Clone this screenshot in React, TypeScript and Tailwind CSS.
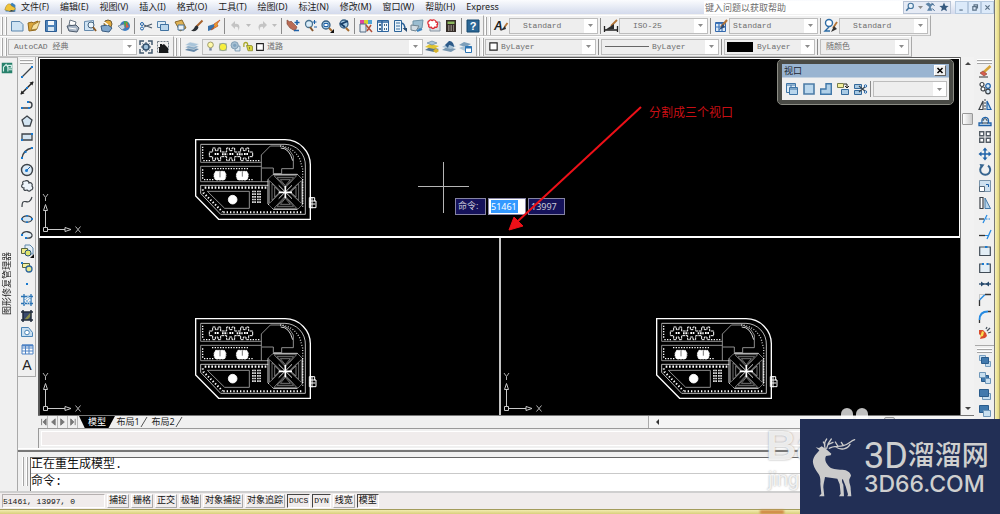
import React from "react";

const B = "#1f62a8";
const L = "#b9d6ec";
const K = "#3c4248";

const icons: Record<string, React.ReactNode> = {
  new: <path d="M2.500 3.500h8.500l3 3v6.500h-11.500z" fill="#cfe3f3" stroke="#5b86ae" />,
  open: <><path d="M3 13L2 5l4-1 1 1 5-2-2 9z" fill="#d9a53a" stroke="#94691c" /><path d="M5 12l2-5 7-4-3 8z" fill="#f7e2a0" stroke="#8d6a24" strokeWidth=".7" /></>,
  save: <><path d="M2.500 2.500h11v11h-11z" fill="#4e83b9" stroke="#2b5c93" /><path d="M5 3h6v4H5z" fill="#f4f8fb" /><path d="M5 9h6v4H5z" fill="#d7e6f2" /></>,
  print: <><path d="M5 2l6 2-1 4-6-1z" fill="#fff" stroke="#66727f" /><path d="M2 8l9-1 3 3-2 4-8-1z" fill="#a9b6c6" stroke="#4d5b6c" /><path d="M4 10l7 1" stroke="#fff" /></>,
  preview: <><path d="M2.500 3.500l9-1v10h-9z" fill="#cfe3f3" stroke="#6489ac" /><circle cx="9" cy="7" r="3" fill="#eaf4fb" stroke="#44637f" /><path d="M11 9l3 4" stroke="#8a5a28" strokeWidth="1.800" /></>,
  publish: <><circle cx="9" cy="6" r="4" fill="#e2aa3c" stroke="#6d5a36" /><path d="M2 8l7-1 4 3-3 4-7-1z" fill="#7fa6cc" stroke="#395b80" /><path d="M5 4l4 3" stroke="#fff" strokeWidth="1.500" /></>,
  globe: <><circle cx="9" cy="8" r="5" fill="#3d7cc0" /><path d="M8 3l4 1v3l-4 2z" fill="#4ca64d" /><path d="M2 8l6-2 1 4-3 2z" fill="#c5d5e5" stroke="#66788b" strokeWidth=".7" /><path d="M10 4l3 5-3 1z" fill="#d95c43" /></>,
  cut: <><path d="M14 6L6 9M14 10L6 7" stroke="#4a5a6b" strokeWidth="1.300" /><circle cx="4" cy="6" r="1.500" fill="none" stroke={B} /><circle cx="4" cy="10.500" r="1.500" fill="none" stroke={B} /></>,
  copy: <><path d="M2.500 3.500h8v6h-8z" fill="#dcebf6" stroke="#5885ad" /><path d="M5.500 6.500h8v6h-8z" fill={L} stroke="#3f719f" /></>,
  paste: <><path d="M3 4l7-2 4 8-6 3z" fill="#e0b355" stroke="#8a6a2a" /><path d="M6 7h6v5H6z" fill="#e9f2f9" stroke="#47729b" /></>,
  brush: <><path d="M13.500 2.500L7 9" stroke="#a8632c" strokeWidth="2" /><path d="M8 7.500c-3 0-2 4-6 5 3 2 7 0 7.500-3.500z" fill="#2b2f33" /></>,
  block: <><path d="M2 8l6-2v5l-6 2z" fill="#3a72ab" /><path d="M14 2L8 6l1 2-4 4 7-4-1-2z" fill="#eea12b" stroke="#be4c20" strokeWidth=".7" /></>,
  undo: <path d="M3 7l4-4v3c4-1 6 3 3 7 1-4-1-5-3-4v2z" fill="#c4c4c4" />,
  redo: <path d="M13 7L9 3v3C5 5 3 9 6 13c-1-4 1-5 3-4v2z" fill="#c4c4c4" />,
  pan: <><path d="M2 2l3 2 1-1 6 6-2 4-5-3-3-4z" fill="#b96b55" stroke="#7d4334" strokeWidth=".6" /><path d="M12 2v5M9.500 4.500h5M9 12.500h5" stroke={B} strokeWidth="1.500" /></>,
  zoomrt: <><circle cx="7" cy="6" r="3.500" fill="#d9ecf8" stroke="#49728f" strokeWidth="1.300" /><path d="M8 9l3 4" stroke="#87562c" strokeWidth="2" /><path d="M12.500 2v4M10.500 4h4M12 9h3" stroke={B} /></>,
  zoomwin: <><circle cx="7" cy="7" r="4" fill="#a9cce4" stroke="#355f84" strokeWidth="1.300" /><path d="M5 5.500h4v3H5z" fill="#fff" stroke={B} /><path d="M10 10l3 3" stroke="#a66c2f" strokeWidth="2" /><path d="M15 11v4h-4z" fill="#111" /></>,
  zoomprev: <><circle cx="8" cy="6" r="4" fill="#a9cce4" stroke="#355f84" strokeWidth="1.300" /><path d="M12 3L5 6l4 3" fill="none" stroke="#173f69" strokeWidth="1.800" /><path d="M10 10l3 3" stroke="#a66c2f" strokeWidth="2" /></>,
  props: <><path d="M2 2h12v4H2z" fill="#51a3d6" /><path d="M2 2h4v4H2z" fill="#e047a0" /><path d="M6 2h4v4H6z" fill="#d3d432" /><path d="M2 6h6v8H2z" fill="#e2e9f0" stroke="#526b84" /><path d="M8 7l6 7M13 7l-4 6" stroke="#b14c36" strokeWidth="1.500" /></>,
  dcenter: <><path d="M2.500 2.500h11v11h-11z" fill="#f1f7fb" stroke="#2e659e" /><path d="M2.500 4h11M7 2v12" stroke="#2e659e" strokeWidth="1.500" /><path d="M4 6h2v2H4zM9 6h1v2H9zM11 6h1v2h-1zM4 10h2v2H4zM9 10h1v2H9zM11 10h1v2h-1z" fill="#476987" /></>,
  palettes: <><path d="M2.500 2.500h7v11h-7z" fill="#e7f2fa" stroke="#2b6398" /><path d="M4 5h4M4 8h4M4 11h4" stroke="#386e9f" /><path d="M9 5c3 0 4 3 4 7" fill="none" stroke="#2a6198" strokeWidth="1.500" /><path d="M10.500 10h4.500v4z" fill="#294d72" /></>,
  sheet: <><path d="M4 3l10-1-1 8-9 2z" fill="#9bbdd0" stroke="#6f94a8" /><path d="M2 7l8 1-3 5-5-1z" fill="#d3dce2" stroke="#708490" /><path d="M8 13l5-2" stroke="#3b83bf" strokeWidth="2" /></>,
  markup: <><path d="M4 4h10v9H4z" fill="#d9dfe5" stroke="#8492a0" /><path d="M3 3c1-2 3-1 3 0 1-2 4-1 4 1 2 0 2 3 1 3 1 2-1 3-2 2-1 2-3 2-4 0-2 1-3-1-2-2-2-1-1-4 0-4z" fill="#fff" stroke="#e02832" strokeWidth="1.300" /></>,
  calc: <><path d="M3 2h10v12H3z" fill="#352d28" /><path d="M4.500 3.500h7v2.500h-7z" fill="#8bb65e" /><path d="M5 8h6M5 10h6M5 12h6" stroke="#d4cac1" strokeDasharray="1.500 1" /></>,
  help: <><path d="M2 2h12v12H2z" fill="#2b6795" stroke="#17496f" /><text x="8" y="12" textAnchor="middle" fontSize="11" fontWeight="700" fill="#fff" fontFamily="Liberation Sans">?</text></>,
  gear: <><path d="M2 6V2h4M10 2h4v4M14 10v4h-4M6 14H2v-4" fill="none" stroke="#41586d" strokeWidth="1.500" /><circle cx="8" cy="8" r="3" fill="#9ec0da" stroke="#36536f" strokeWidth="1.500" /><path d="M8 3v2M8 11v2M3 8h2M11 8h2M4.500 4.500l1 1M10.500 10.500l1 1M4.500 11.500l1-1M10.500 5.500l1-1" stroke="#36536f" /></>,
  wshome: <><path d="M2.500 2.500h11v11h-11z" fill="none" stroke="#6e7a84" strokeDasharray="2 1" /><path d="M3 8h2V5h2v1l2-1 4 4v5H4V9z" fill="#17191b" /></>,
  layers: <><path d="M1 11l5-3 9 2-5 3z" fill="#6588a8" /><path d="M1 8.500l5-3 9 2-5 3z" fill="#86a8c4" stroke="#efefef" strokeWidth=".5" /><path d="M1 6l5-3 9 2-5 3z" fill="#a9c4d9" stroke="#efefef" strokeWidth=".5" /></>,
  bulb: <><circle cx="8" cy="6" r="3.500" fill="#fff9a7" stroke="#8d8a5d" /><path d="M6.500 10h3v3h-3z" fill="#7788a0" /></>,
  sun: <><path d="M3 3h10v10H3z" fill="#a9b8a8" /><circle cx="8" cy="8" r="5" fill="#f7ef3e" stroke="#7c9198" /></>,
  freeze: <><path d="M7.500 7.500h6v6h-6z" fill="#ddeaf3" stroke="#6b8da8" /><circle cx="7" cy="6.500" r="4.500" fill="#a6bfd2" stroke="#7896ae" /><circle cx="7" cy="6.500" r="2" fill="#7fa3bf" /></>,
  lock: <><path d="M2.500 8V4.500a2.500 2.500 0 015 0V8" fill="none" stroke="#a9a829" strokeWidth="1.700" /><path d="M6 6h6a2 2 0 012 2v5H8z" fill="#d9d63c" stroke="#86842a" /><path d="M10 8v3" stroke="#6e6c20" /></>,
  swatch: <path d="M3.500 3.500h9v9h-9z" fill="#fff" stroke="#222" strokeWidth="1.400" />,
  layercur: <><path d="M1 11l5-3 9 2-5 3z" fill="#55748e" /><path d="M1 8l5-3 9 2-5 3z" fill="#e2c634" /><path d="M3 4l5-2 5 2-5 2z" fill="#aac6db" stroke="#587b98" strokeWidth=".6" /><path d="M9 12l3-3 3 3-3 2z" fill="#d8b42c" /></>,
  layerprev: <><path d="M1 11l5-3 9 2-5 3z" fill="#7797b1" /><path d="M1 8l5-3 9 2-5 3z" fill="#a8c2d6" /><path d="M13 8c0-5-3-6-5-6L4 6l3 3 1-3c2 0 3 1 5 2z" fill="#2c5a88" /></>,
  layerstate: <><path d="M1 6l5-3 7 2-5 3z" fill="#7d9fba" /><path d="M1 9l5-2 5 2-4 3z" fill="#a9c3d6" /><path d="M7.500 7.500h6v6h-6z" fill="#fff" stroke="#2c74b3" /><path d="M7 8.500h7" stroke="#2c74b3" strokeWidth="2" /></>,
  textstyle: <><text x="1" y="12" fontSize="12" fontStyle="italic" fontWeight="700" fill="#1b1e21" fontFamily="Liberation Sans">A</text><path d="M14.500 5l-3 4" stroke="#b37436" strokeWidth="1.800" /><path d="M12 8l-5 5 6-2z" fill="#2c2c2c" /></>,
  dimstyle: <><path d="M1.500 8v6M14.500 8v6M2 12h12" stroke="#222" strokeWidth="1.300" /><path d="M14 2L8 8" stroke="#b37436" strokeWidth="1.800" /><path d="M11 6l-9 6 9-1z" fill="#2c2c2c" /></>,
  tablestyle: <><path d="M2.500 4.500h10v9h-10z" fill="#dbe9f6" stroke="#3469ad" /><path d="M2 5.500h11M2 9h11M6 5v8M9 5v8" stroke="#3f77bc" strokeWidth="1.200" /><path d="M14 2L8 9" stroke="#b37436" strokeWidth="2" /><path d="M10 6l-4 6 6-3z" fill="#2c4d77" /></>,
  leader: <><circle cx="6" cy="5" r="3.500" fill="#fff" stroke="#2d6ca5" strokeWidth="1.400" /><path d="M6 9l-4 4h5" fill="none" stroke="#2d6ca5" strokeWidth="1.400" /><path d="M14 4l-4 6" stroke="#b37436" strokeWidth="1.800" /><path d="M11 8l-3 6 6-3z" fill="#333" /></>,
  line: <><path d="M3 13L13 3" stroke={K} strokeWidth="1.300" /><path d="M2 12h2v2H2zM12 2h2v2h-2z" fill="#1879cf" /></>,
  xline: <><path d="M2 14L14 2" stroke="#222" strokeWidth="1.400" /><path d="M1.500 14.500l1-4 3 3zM14.500 1.500l-4 1 3 3z" fill="#222" /><path d="M7 7h2v2H7z" fill="#1879cf" /></>,
  pline: <><path d="M3 11h7a3 3 0 000-6H9" fill="none" stroke={K} strokeWidth="1.400" /><path d="M2 10h2v2H2zM9 10h2v2H9zM8 4h2v2H8z" fill="#1879cf" /></>,
  polygon: <path d="M8 3l5 4-2 6H5L3 7z" fill="#d3e4f1" stroke={K} strokeWidth="1.300" />,
  rect: <><path d="M3 5h10v6H3z" fill="#d3e4f1" stroke={K} strokeWidth="1.300" /><path d="M2 10h2v2H2zM12 4h2v2h-2z" fill="#1879cf" /></>,
  arc: <><path d="M3 13C4 7 8 4 13 3" fill="none" stroke={K} strokeWidth="1.400" /><path d="M2 12h2v2H2zM12 2h2v2h-2zM5.500 6h2v2h-2z" fill="#1879cf" /></>,
  circle: <><circle cx="8" cy="8" r="5.500" fill="#dceaf5" stroke={K} strokeWidth="1.400" /><path d="M7 9l4-4" stroke={B} /><circle cx="7.500" cy="8.500" r="1.500" fill="#1879cf" /></>,
  cloud: <path d="M6 3c2-1 4 0 4 2 2-1 4 1 3 3 2 2 0 4-1 4-1 2-3 1-4 0-2 1-4 0-3-2-3 0-3-3-1-4-1-2 0-3 2-3z" fill="#edf4fa" stroke={K} strokeWidth="1.200" />,
  spline: <path d="M3 13c0-12 7 1 10-10" fill="none" stroke={K} strokeWidth="1.200" />,
  ellipse: <><ellipse cx="8" cy="8" rx="5" ry="3.200" fill="#d3e4f1" stroke={K} strokeWidth="1.300" /><path d="M2 7h2v2H2zM12 7h2v2h-2zM7 4h2v1.500H7zM7 10.500h2V12H7z" fill="#1879cf" /></>,
  ellarc: <><path d="M3 8c0-5 11-4 10 1-1 3-4 2-6 2" fill="#e7f1f8" stroke={K} strokeWidth="1.300" /><path d="M2 7h2v2H2zM6 10h2v2H6z" fill="#1879cf" /></>,
  insert: <><path d="M6 2h5l3 3v6H6z" fill="#e3eef7" stroke="#6189aa" /><path d="M2.500 5.500h6v5h-6z" fill="#f0eb88" stroke="#58663e" /><circle cx="9" cy="10" r="3" fill="#dde36d" stroke="#27527a" /><path d="M15 11v4h-4z" fill="#111" /></>,
  mkblock: <><path d="M3.500 4.500h7v4h-7z" fill="#f3f0a0" stroke="#58663e" /><circle cx="10" cy="10" r="3" fill="#e8e98c" stroke="#2b639a" strokeWidth="1.300" /><path d="M2 3h2v2H2z" fill="#1879cf" /></>,
  point: <path d="M7 7h2v2H7z" fill="#1879cf" />,
  hatch: <><path d="M5 2v12M12 2v12M2 4.500h12M2 11.500h12" stroke="#2b73b3" strokeWidth="1.300" /><path d="M5 9l5-5M5 12l7-7M8 12l4-4M5 6l6 6M8 4l4 4" stroke="#94bddf" /></>,
  gradient: <><path d="M4 4h8v8H4z" fill="#3a4a6c" /><path d="M5 12l7-8v4l-4 4z" fill="#8d9047" /><path d="M4 2v12M12 2v12M2 4h12M2 12h12" stroke="#202b3b" strokeWidth="1.500" /></>,
  region: <><path d="M2.500 3.500h7l4 5v4h-11z" fill="#c9dff0" stroke="#4a84b6" /><circle cx="8" cy="8.500" r="2.300" fill="#fff" stroke="#4a84b6" /></>,
  table: <><path d="M3 4h11v9H3z" fill="#fff" stroke="#4f83c5" /><path d="M3 4.500h11" stroke="#4f83c5" strokeWidth="2" /><path d="M3 7h11M3 10h11M6.500 4v9M10 4v9" stroke="#4f83c5" /></>,
  mtext: <text x="8" y="13" textAnchor="middle" fontSize="14" fill="#222" fontFamily="Liberation Sans">A</text>,
  erase: <><path d="M13.500 2L7 8" stroke="#d6a438" strokeWidth="2.500" /><path d="M3 9l3-2 4 3-3 2z" fill="#d85e4e" stroke="#823c31" strokeWidth=".6" /><path d="M2 13h9" stroke="#333" /></>,
  copyobj: <><circle cx="5" cy="4.500" r="2" fill="#fff" stroke={K} strokeWidth="1.200" /><circle cx="11" cy="6" r="2.300" fill="#d6e8f5" stroke={B} strokeWidth="1.200" /><circle cx="6" cy="9" r="2" fill="#fff" stroke={K} strokeWidth="1.200" /><circle cx="11" cy="11.500" r="2.300" fill="#d6e8f5" stroke={K} strokeWidth="1.200" /></>,
  mirror: <><path d="M6 4v8.500H2z" fill="#fff" stroke={K} strokeWidth="1.200" /><path d="M10 4v8.500h4z" fill={L} stroke={B} strokeWidth="1.200" /><path d="M8 2v12" stroke={K} strokeDasharray="2 1" /></>,
  offset: <><path d="M2 12.500h12V10h-3c3-7-8-8-6 0H2z" fill="#d8e8f4" stroke={B} strokeWidth="1.300" /><path d="M5 10h6M6 8c0-3 4-3 4 0" fill="none" stroke={K} /></>,
  array: <path d="M2.700 2.700h4v4h-4zM9.300 2.700h4v4h-4zM2.700 9.300h4v4h-4zM9.300 9.300h4v4h-4z" fill="#fff" stroke="#555d65" strokeWidth="1.400" />,
  move: <><path d="M8 3v10M3 8h10" stroke={B} strokeWidth="1.500" /><path d="M8 1.500l2.500 3h-5zM8 14.500l2.500-3h-5zM1.500 8l3-2.500v5zM14.500 8l-3-2.500v5z" fill={B} /></>,
  rotate: <><path d="M5 4a5 5 0 106-.3" fill="none" stroke="#37658f" strokeWidth="2" /><path d="M2.500 2l5 .5-3 4z" fill="#37658f" /></>,
  scale: <><path d="M2.500 2.500h11v11h-11z" fill="#cfe1ef" stroke="#7b95ab" /><path d="M2.500 8.500h5v5h-5z" fill="#fff" stroke="#536779" /><path d="M9 6.500h2.500V9" fill="none" stroke={B} /></>,
  stretch: <><path d="M3 2.500h3v11H3z" fill="#fff" stroke={K} strokeWidth="1.200" /><path d="M8 3l5.500 10.500H8z" fill="#bad5ea" stroke="#4178a7" /></>,
  trim: <><path d="M2 8h5" stroke="#333" strokeWidth="1.300" /><path d="M6 12l4-8" stroke="#278be1" strokeWidth="1.300" /><path d="M9 8h5" stroke="#278be1" strokeDasharray="1.500 1" /></>,
  extend: <><path d="M2 8.500h6" stroke="#333" strokeWidth="1.300" /><path d="M8 8.500h3" stroke="#278be1" /><path d="M10 12l4-9" stroke="#278be1" strokeWidth="1.300" /></>,
  breakpt: <><path d="M2.700 4h10.600v8.500H2.700z" fill="#e3eef6" stroke="#414c57" strokeWidth="1.200" /><path d="M8 3h2.500v2H8z" fill="#1879cf" /></>,
  breakobj: <><path d="M5.500 4H2.700v8.500h10.600V4h-2.800" fill="#e3eef6" stroke="#414c57" strokeWidth="1.200" /><path d="M5 3h2v2H5zM9.500 3h2v2h-2z" fill="#1879cf" /></>,
  join: <><path d="M2 8h12" stroke="#26486b" strokeWidth="1.300" /><path d="M4 5.500L7.500 8 4 10.500zM12 5.500L8.500 8l3.500 2.500z" fill="#26486b" /></>,
  chamfer: <><path d="M2.500 14V8M8 2.500h6" stroke="#333" strokeWidth="1.300" /><path d="M2.500 8L8 2.500" stroke="#278be1" strokeWidth="1.500" /><path d="M2.500 8V2.500H8" fill="none" stroke="#aaa" strokeWidth=".6" /></>,
  fillet: <><path d="M2.500 14v-3M11 2.500h3" stroke="#333" strokeWidth="1.300" /><path d="M2.500 11c0-6 3-8.500 8.500-8.500" fill="none" stroke="#278be1" strokeWidth="1.800" /></>,
  explode: <><path d="M2 5l4 0 3 3 1 3-2 2-5 1 1-3-2-2z" fill="#d94b2c" /><path d="M5 6l2 1-1 4-3 1z" fill="#f9dc4c" /><path d="M10 6l3-3M11 8l3-1M9 4l1-2" stroke="#4c5864" strokeWidth="1.300" /></>,
  front: <><path d="M2.500 2.500h6v5h-6zM8.500 8.500h5v5h-5z" fill="#c8dff0" stroke="#79a0c1" /><path d="M4.500 4.500h7v6h-7z" fill="#4179ad" stroke="#2a5c8c" /></>,
  back: <><path d="M4.500 5.500h7v6h-7z" fill="#4179ad" stroke="#2a5c8c" /><path d="M2.500 2.500h6v5h-6zM8.500 8.500h5v5h-5z" fill="#c8dff0" stroke="#6f97b9" /></>,
  above: <><path d="M5.500 7.500h8v6h-8z" fill="#c8dff0" stroke="#6f97b9" /><path d="M2.500 3.500h9v7h-9z" fill="#4179ad" stroke="#2a5c8c" /></>,
  under: <><path d="M2.500 2.500h9v7h-9z" fill="#4179ad" stroke="#2a5c8c" /><path d="M6.500 7.500h7v6h-7z" fill="#c8dff0" stroke="#6f97b9" /></>,
  vpdialog: <><path d="M2.500 2.500h9v9h-9z" fill="#dcebf6" stroke="#3f75a6" /><path d="M2.500 4h9M7 4v7" stroke="#3f75a6" /><path d="M5.500 6.500h8v7h-8z" fill={L} stroke="#3f75a6" /><path d="M5.500 8h8" stroke="#3f75a6" /></>,
  vpsingle: <path d="M3 3h10v10H3z" fill="#bbd8ee" stroke="#4d7ca6" strokeWidth="1.600" />,
  vppoly: <path d="M8 2.700h5.300v10.600H2.700V8H8z" fill="#b0d0e8" stroke="#4178a9" strokeWidth="1.400" />,
  vpobject: <><path d="M2.500 2.500h6v4h-6z" fill="#f3ee9c" stroke="#777b4a" /><path d="M6.500 8.500h7v5h-7z" fill="#a8cae4" stroke="#34699a" /><path d="M9 3h3v3M10 5l2 2 2-2" fill="none" stroke="#222" /></>,
  vpclip: <><path d="M2.500 3.500h7v4h-7zM2.500 9.500h7v4h-7z" fill="#a8cae4" stroke="#34699a" /><path d="M7 5l7 6M7 11l7-6" stroke="#3b4650" strokeWidth="1.200" /><circle cx="13.500" cy="5" r="1.200" fill="#fff" stroke={B} /><circle cx="13.500" cy="11" r="1.200" fill="#fff" stroke={B} /></>,
  search: <><circle cx="9" cy="6.500" r="3.500" fill="#e9f3fb" stroke="#44749e" strokeWidth="1.500" /><path d="M6.500 9L3 13" stroke="#44749e" strokeWidth="2" /></>,
  comm: <><path d="M2 4l5 4-3 5h7l-2-5 4-5-4 1-3-2z" fill="#5d83a6" /><path d="M10 3l4 3M11 10l3 3" stroke="#2b5582" strokeWidth="1.300" /></>,
  star: <path d="M8 2l1.800 4.200 4.400.3-3.400 2.900 1.100 4.400L8 11.400l-3.900 2.400 1.100-4.400L1.800 6.500l4.400-.3z" fill="#35597f" />,
  logo: <><path d="M2 8l8-6 4 3v8H2z" fill="#3c83bd" /><path d="M1 11c2-8 5-8 7-7 1 4 5 2 6 6l-5 3z" fill="#f1c43b" stroke="#9d7a1f" strokeWidth=".6" /><path d="M9 11l5 2H6z" fill="#1d3658" /></>,
  repair: <><path d="M2 2h12v12H2z" fill="#26806b" /><path d="M4 12V7l3-3 2 3v5M9 5h4v3H9zM10 10h4" fill="none" stroke="#d6efe9" strokeWidth="1.300" /></>,
};

function Glyph({ name, className = "size-4" }: { name: string; className?: string }) {
  return (
    <svg viewBox="0 0 16 16" className={`shrink-0 ${className}`} fill="none" aria-hidden="true">
      {icons[name]}
    </svg>
  );
}

function Tool({ name, label, className = "w-[17px]" }: { name: string; label: string; className?: string }) {
  return (
    <button aria-label={label} className={`flex shrink-0 items-center justify-center ${className}`}>
      <Glyph name={name} className="size-4" />
    </button>
  );
}

const Tools = ({ items }: { items: [string, string][] }) => (
  <>
    {items.map(([n, l]) => (
      <Tool key={n} name={n} label={l} />
    ))}
  </>
);

const Sep = () => <span className="mx-[2px] h-4 w-px shrink-0 bg-[#8b8b8b]" />;

const Grip = () => (
  <span className="flex shrink-0 gap-[2px] px-px">
    <span className="h-[18px] w-[2px] border-r border-[#a5a5a5] bg-white" />
    <span className="h-[18px] w-[2px] border-r border-[#a5a5a5] bg-white" />
  </span>
);

const HGrip = () => (
  <span className="flex flex-col gap-px px-[2px] pt-[2px]">
    <span className="h-[2px] border-b border-[#a5a5a5] bg-white" />
    <span className="h-[2px] border-b border-[#a5a5a5] bg-white" />
  </span>
);

const Caret = () => (
  <svg viewBox="0 0 5 3" className="h-[3px] w-[5px]" aria-hidden="true">
    <path d="M0 0h5L2.500 3z" fill="#8c8c8c" />
  </svg>
);

function Combo({ label, value, width, indent = "pl-[5px]", children }: {
  label: string; value: string; width: string; indent?: string; children?: React.ReactNode;
}) {
  return (
    <span className={`flex h-4 shrink-0 items-stretch border border-[#bdbdbd] bg-[#eeeeee] ${width}`}>
      {children && <span className="flex items-center pl-px">{children}</span>}
      <select
        aria-label={label}
        className={`min-w-0 flex-1 appearance-none bg-transparent font-['Liberation_Mono','Noto_Sans_CJK_SC',monospace] text-[8px] leading-[14px] text-[#6d6d6d] ${indent}`}
      >
        <option>{value}</option>
      </select>
      <span className="pointer-events-none flex w-[13px] items-center justify-center bg-white">
        <Caret />
      </span>
    </span>
  );
}

const Bar = ({ children }: { children: React.ReactNode }) => (
  <div className="flex h-[21px] shrink-0 items-center border-t border-r border-b border-t-white border-r-[#aaa] border-b-[#c4c4c4] pr-[2px]">
    {children}
  </div>
);

function SitePlan() {
  return (
    <svg viewBox="42 24 372 252" className="absolute top-[79px] left-[154px] h-[84px] w-[124px]" fill="none" stroke="#fff" strokeWidth="2.500" aria-label="总平面图">
      <path d="M47 29H315A76 76 0 01391 108V268H116L47 198z" strokeWidth="4" />
      <path d="M62 43H315A62 62 0 01376 108V253H122L62 190V166H265" stroke="#ddd" />
      <path d="M62 43V97H244M62 109H244M62 109V155H265M244 155V75L271 48H305L328 60 340 78V116H305V131H280V114H246" stroke="#aaa" />
      <path d="M300 48q40 2 60 40l8 30V235" stroke="#ccc" strokeDasharray="3 5" strokeWidth="4" />
      <path d="M302 54q26 0 36 38" />
      <path d="M70 92H92M210 92H240M96 116H206M72 149H104M206 149H218M68 50V88M68 118V146" strokeWidth="4" strokeDasharray="4 4" />
      <path d="M74 173H262" strokeWidth="7" strokeDasharray="5 5" />
      <path d="M68 178L70 188 128 246M130 247H368" strokeWidth="6" strokeDasharray="4 6" />
      <path d="M88 66h10v-12h8v8h8v-8h8v12h18v-12h8v8h8v-8h8v12h18v-12h8v8h8v-8h8v12h12v14h-12v12h-8v-8h-8v8h-8v-12h-18v12h-8v-8h-8v8h-8v-12h-18v12h-8v-8h-8v8h-8v-12h-10z" strokeWidth="3" strokeDasharray="9 2" />
      <path d="M104 72h12M126 73h16M148 72h12M170 73h18M192 72h12" strokeWidth="6" strokeDasharray="5 2" />
      <path d="M107 124h26q10 12 0 26h-26q-10-13 0-26zM174 124h26q10 12 0 26h-26q-10-13 0-26z" fill="#fff" strokeDasharray="6 2" />
      <path d="M120 124v18M187 124v16" stroke="#333" strokeWidth="2" />
      <path d="M82 184H208V235H134z" stroke="#aaa" />
      <circle cx="158" cy="209" r="13" fill="#fff" />
      <path d="M222 182v40M237 182v40" strokeWidth="11" strokeDasharray="5 3" />
      <path d="M222 182v40M237 182v40" stroke="#000" strokeWidth="2" />
      <path d="M280 133H352L368 149V222L352 238H280L264 222V149z" />
      <path d="M282 137h68l-34 38zM291 143h50l-25 28zM301 149h30l-15 18zM282 235h68l-34-38zM291 229h50l-25-28zM301 223h30l-15-18zM268 152v68l38-34zM276 161v50l26-25zM284 171v30l16-15zM364 152v68l-38-34zM356 161v50l-26-25zM348 171v30l-16-15z" stroke="#aaa" strokeWidth="2" />
      <path d="M272 141l88 89M360 141l-88 89" stroke="#000" strokeWidth="15" />
      <path d="M296 166l40 40M336 166l-40 40" stroke="#ddd" strokeWidth="3" />
      <path d="M316 168v37M296 187h40" strokeWidth="5" />
      <path d="M388 203h16v10h4v20h-20zM388 213h18M388 222h18M396 201v34" strokeWidth="3" />
    </svg>
  );
}

function UcsIcon() {
  return (
    <svg viewBox="0 0 46 42" className="absolute bottom-0 left-0 h-[42px] w-[46px]" fill="none" stroke="#c9c9c9" aria-label="UCS">
      <path d="M3.500 33.500h4v4h-4zM5.500 33V16M8 35.500h17M3.500 16.500l2-6 2 6zM25 33.500l6 2-6 2z" />
      <path d="M3 0l2.500 3.500L8 0M5.500 3.500V7M35.500 32.500l5 6M40.500 32.500l-5 6" stroke="#b0b0b0" />
    </svg>
  );
}

const menus = ["文件(F)", "编辑(E)", "视图(V)", "插入(I)", "格式(O)", "工具(T)", "绘图(D)", "标注(N)", "修改(M)", "窗口(W)", "帮助(H)", "Express"];

const drawTools: [string, string][] = [
  ["line", "直线"], ["xline", "构造线"], ["pline", "多段线"], ["polygon", "正多边形"], ["rect", "矩形"], ["arc", "圆弧"], ["circle", "圆"],
  ["cloud", "修订云线"], ["spline", "样条曲线"], ["ellipse", "椭圆"], ["ellarc", "椭圆弧"], ["insert", "插入块"], ["mkblock", "创建块"],
  ["point", "点"], ["hatch", "图案填充"], ["gradient", "渐变色"], ["region", "面域"], ["table", "表格"], ["mtext", "多行文字"],
];

const modifyTools: [string, string][] = [
  ["erase", "删除"], ["copyobj", "复制"], ["mirror", "镜像"], ["offset", "偏移"], ["array", "阵列"], ["move", "移动"], ["rotate", "旋转"],
  ["scale", "缩放"], ["stretch", "拉伸"], ["trim", "修剪"], ["extend", "延伸"], ["breakpt", "打断于点"], ["breakobj", "打断"],
  ["join", "合并"], ["chamfer", "倒角"], ["fillet", "圆角"], ["explode", "分解"],
];

const orderTools: [string, string][] = [["front", "前置"], ["back", "后置"], ["above", "置于对象之上"], ["under", "置于对象之下"]];

const toggles: [string, boolean][] = [
  ["捕捉", false], ["栅格", false], ["正交", false], ["极轴", false], ["对象捕捉", false], ["对象追踪", false],
  ["DUCS", true], ["DYN", true], ["线宽", false], ["模型", true],
];

function MenuBar() {
  return (
    <header className="flex h-[14px] shrink-0 items-center bg-linear-to-b from-[#fbfcfe] to-[#d3daec]">
      <Glyph name="logo" className="ml-[4px] size-[13px]" />
      <nav className="ml-[4px] flex gap-[11px]">
        {menus.map((m) => (
          <button key={m} className="text-[9px] leading-[14px] whitespace-nowrap text-[#1c1c1c]">{m}</button>
        ))}
      </nav>
      <input aria-label="搜索帮助" placeholder="键入问题以获取帮助" className="ml-auto h-[13px] w-[199px] bg-white pl-px text-[9px] leading-[13px] placeholder:text-[#6b6b6b]" />
      <div className="mr-[4px] flex h-[13px] w-[48px] items-center justify-between border border-[#b9c4d6] bg-[#e6ebf5]">
        <button aria-label="搜索"><Glyph name="search" className="size-[12px]" /></button>
        <button aria-label="搜索选项"><Caret /></button>
        <button aria-label="通讯中心"><Glyph name="comm" className="size-[12px]" /></button>
        <button aria-label="收藏夹"><Glyph name="star" className="size-[12px]" /></button>
      </div>
      {["M4 9.500h4", "M4.500 5.500h4v4h-4zM6 5V3.500h4V7H9", "M4 4l5 5M9 4l-5 5"].map((d, i) => (
        <button key={d} aria-label={["最小化", "还原", "关闭"][i]} className="h-[13px] w-[13px] border border-[#b7cae0] bg-[#dceafa]">
          <svg viewBox="0 0 13 13" className="size-[11px]" fill="none" stroke="#5b7186" strokeWidth="1.400"><path d={d} /></svg>
        </button>
      ))}
    </header>
  );
}

function Toolbars() {
  return (
    <div className="flex h-[43px] shrink-0 flex-col bg-[#f0f0f0] pt-px">
      <div className="flex">
        <Bar>
          <Grip />
          <Tools items={[["new", "新建"], ["open", "打开"], ["save", "保存"]]} />
          <Sep />
          <Tools items={[["print", "打印"], ["preview", "打印预览"], ["publish", "发布"], ["globe", "三维 DWF"]]} />
          <Sep />
          <Tools items={[["cut", "剪切"], ["copy", "复制"], ["paste", "粘贴"], ["brush", "特性匹配"], ["block", "块编辑器"]]} />
          <Sep />
          <Tool name="undo" label="放弃" />
          <button aria-label="放弃列表" className="flex w-[9px] justify-center opacity-50"><Caret /></button>
          <Tool name="redo" label="重做" />
          <button aria-label="重做列表" className="flex w-[9px] justify-center opacity-50"><Caret /></button>
          <Sep />
          <Tools items={[["pan", "实时平移"], ["zoomrt", "实时缩放"], ["zoomwin", "窗口缩放"], ["zoomprev", "缩放上一个"]]} />
          <Sep />
          <Tools items={[["props", "特性"], ["dcenter", "设计中心"], ["palettes", "工具选项板"], ["sheet", "图纸集管理器"], ["markup", "标记集管理器"], ["calc", "快速计算器"]]} />
          <Sep />
          <Tool name="help" label="帮助" />
        </Bar>
        <Bar>
          <Grip />
          <Tool name="textstyle" label="文字样式" />
          <Combo label="文字样式" value="Standard" width="w-[89px]" indent="pl-[13px]" />
          <Sep />
          <Tool name="dimstyle" label="标注样式" className="w-4" />
          <Combo label="标注样式" value="ISO-25" width="w-[89px]" indent="pl-[13px]" />
          <Sep />
          <Tool name="tablestyle" label="表格样式" className="w-4" />
          <Combo label="表格样式" value="Standard" width="w-[89px]" indent="pl-[3px]" />
          <Sep />
          <Tool name="leader" label="多重引线样式" className="w-4" />
          <Combo label="多重引线样式" value="Standard" width="w-[89px]" indent="pl-[13px]" />
        </Bar>
      </div>
      <div className="flex">
        <Bar>
          <Grip />
          <Combo label="工作空间" value="AutoCAD 经典" width="w-[129px]" />
          <Tools items={[["gear", "工作空间设置"], ["wshome", "我的工作空间"]]} />
        </Bar>
        <Bar>
          <Grip />
          <Tool name="layers" label="图层特性管理器" className="w-5" />
          <Combo label="图层" value="道路" width="w-[221px]" indent="pl-px">
            <Glyph name="bulb" className="size-[13px]" />
            <Glyph name="sun" className="size-[12px]" />
            <Glyph name="freeze" className="size-[13px]" />
            <Glyph name="lock" className="size-[12px]" />
            <Glyph name="swatch" className="size-[12px]" />
          </Combo>
          <Tools items={[["layercur", "将对象的图层置为当前"], ["layerprev", "上一个图层"], ["layerstate", "图层状态管理器"]]} />
        </Bar>
        <Bar>
          <Grip />
          <Combo label="颜色" value="ByLayer" width="w-[111px]" indent="pl-[1px]"><Glyph name="swatch" className="size-[13px]" /></Combo>
          <Sep />
          <Combo label="线型" value="ByLayer" width="w-[118px]" indent="pl-[3px]"><span className="ml-[2px] h-px w-[44px] bg-[#666]" /></Combo>
          <Sep />
          <Combo label="线宽" value="ByLayer" width="w-[91px]" indent="pl-[4px]"><span className="ml-px h-[10px] w-[26px] bg-black" /></Combo>
          <Sep />
          <Combo label="打印样式" value="随颜色" width="w-[89px]" />
        </Bar>
      </div>
    </div>
  );
}

function ViewportPalette() {
  return (
    <section className="absolute top-[2px] right-[7px] w-[175px] rounded-[4px] border-4 border-[#494a45] bg-[#f0f0f0] outline outline-[#8b8c84]">
      <div className="flex h-[14px] items-center justify-between border-b border-[#c4d2e0] bg-[#99b4d1] pr-[3px] pl-[2px]">
        <h2 className="text-[9px] leading-[13px] text-[#1b2530]">视口</h2>
        <button aria-label="关闭视口工具栏" className="h-[11px] w-[12px] border border-white border-r-[#666] border-b-[#666] bg-[#f0f0f0]">
          <svg viewBox="0 0 10 9" className="h-[9px] w-[10px]" stroke="#000" strokeWidth="1.500"><path d="M2.500 2l5 5M7.500 2l-5 5" /></svg>
        </button>
      </div>
      <div className="flex h-[22px] items-center pl-px">
        <Tools items={[["vpdialog", "视口对话框"], ["vpsingle", "单个视口"], ["vppoly", "多边形视口"], ["vpobject", "将对象转换为视口"], ["vpclip", "裁剪现有视口"]]} />
        <Sep />
        <Combo label="视口比例" value="" width="w-[74px]" />
      </div>
    </section>
  );
}

function DrawingArea() {
  return (
    <div className="relative grid min-w-0 flex-1 grid-rows-[180fr_177fr] border-t border-l border-[#5a5a5a] bg-black">
      <div className="relative overflow-hidden border border-b-2 border-white">
        <SitePlan />
        <UcsIcon />
        <svg className="absolute top-[103px] left-[378px] h-[51px] w-[51px]" stroke="#b5b5b5" aria-label="十字光标"><path d="M0 24.500h51M25.500 0v51" /></svg>
        <div className="absolute top-[139px] left-[415px] flex gap-[2px] text-[9px] leading-[14px]">
          <span className="h-[17px] w-[31px] border border-[#8583a3] bg-[#15125a] pl-[2px] text-[#c9c9d8]">命令:</span>
          <span className="flex h-[17px] w-[38px] items-center border border-[#8583a3] bg-white pl-[2px]">
            <input aria-label="X 坐标" defaultValue="51461" className="h-[13px] w-[27px] bg-[#3399ff] text-white" />
          </span>
          <input aria-label="Y 坐标" defaultValue="13997" className="h-[17px] w-[37px] border border-[#8583a3] bg-[#15125a] pl-[2px] text-[#c9c9d8]" />
        </div>
        <svg viewBox="0 0 140 130" className="absolute top-[46px] left-[466px] h-[130px] w-[140px]" aria-label="箭头">
          <path d="M135 2L12 116" stroke="#ed1018" strokeWidth="2" />
          <path d="M3 125l5-13 9 9z" fill="#ed1018" stroke="#ed1018" />
        </svg>
        <p className="absolute top-[45px] left-[609px] text-[12px] leading-[18px] whitespace-nowrap text-[#c80f14]">分割成三个视口</p>
      </div>
      <div className="flex min-h-0">
        <div className="relative flex-1 overflow-hidden border-l border-[#555]"><SitePlan /><UcsIcon /></div>
        <div className="relative flex-1 overflow-hidden border-l-2 border-[#c4c4c4]"><SitePlan /><UcsIcon /></div>
      </div>
      <ViewportPalette />
    </div>
  );
}

function LayoutTabs() {
  return (
    <div className="flex h-[13px] shrink-0 items-stretch border-t border-[#777] bg-[#f0f0f0] text-[9px] leading-[12px]">
      {["M4 1.500v7M9 1.500v7L5.500 5z", "M8 1.500v7L4 5z", "M3 1.500v7L7 5z", "M8 1.500v7M3 1.500v7L6.500 5z"].map((d, i) => (
        <button key={d} aria-label={["第一个布局", "上一个布局", "下一个布局", "最后一个布局"][i]} className="flex w-[10px] items-center border-r border-[#bbb]">
          <svg viewBox="0 0 10 10" className="size-[10px]" fill="#777" stroke="#777"><path d={d} /></svg>
        </button>
      ))}
      <button className="ml-px w-[36px] bg-black text-white [clip-path:polygon(0_0,100%_0,82%_100%,16%_100%)]">模型</button>
      <button className="ml-px w-[24px] text-[#222]">布局1</button>
      <svg viewBox="0 0 8 12" className="h-3 w-2" stroke="#555"><path d="M1 11L7 1" /></svg>
      <button className="ml-[3px] w-[24px] text-[#222]">布局2</button>
      <svg viewBox="0 0 8 12" className="h-3 w-2" stroke="#555"><path d="M1 11L7 1" /></svg>
      <div className="ml-auto flex w-[326px] items-center border-l border-[#aaa] bg-[#f4f4f4] pl-[6px]">
        <button aria-label="向左滚动">
          <svg viewBox="0 0 5 6" className="block h-[6px] w-[5px]"><path d="M4 0v6L1 3z" fill="#333" /></svg>
        </button>
        <span className="ml-[224px] h-[10px] w-[11px] rounded-[2px] border border-[#999] bg-[#e4e4e4]" />
      </div>
    </div>
  );
}

function CommandArea() {
  return (
    <section className="flex h-[43px] shrink-0 flex-col bg-[#f0f0f0]">
      <div className="h-[9px] shrink-0 border-t border-[#fff]">
        <div className="mt-px h-[2px] bg-[#777]" />
      </div>
      <div className="flex flex-1 pl-[4px]">
        <span className="flex gap-[2px] pr-[2px]">
          <span className="h-[29px] w-[2px] border-r border-[#a5a5a5] bg-white" />
          <span className="h-[29px] w-[2px] border-r border-[#a5a5a5] bg-white" />
        </span>
        <div className="flex-1 border-t border-l border-[#666] bg-white font-['Liberation_Mono','Noto_Sans_CJK_SC',monospace] text-[12px] text-[#111]">
          <p className="h-[16px] border-b border-[#c9c9c9] leading-[15px]">正在重生成模型.</p>
          <label className="flex h-[17px] items-center leading-[17px]">
            命令:
            <input aria-label="命令行" className="h-[14px] flex-1 outline-none" />
          </label>
        </div>
      </div>
    </section>
  );
}

function StatusBar() {
  return (
    <footer className="flex h-[18px] shrink-0 items-center gap-[2px] border-t-2 border-[#cfcfcf] bg-[#f0ecec] pl-[2px] font-['Liberation_Mono','Noto_Sans_CJK_SC',monospace] text-[#111]">
      <output className="h-[14px] w-[103px] border border-[#b5b0b0] border-r-white border-b-white text-[8px] leading-[13px]">51461, 13997, 0</output>
      {toggles.map(([t, on]) => (
        <button
          key={t}
          aria-pressed={on}
          className={`h-[14px] border px-px leading-[12px] whitespace-nowrap ${/^[A-Z]/.test(t) ? "text-[8px]" : "text-[9px]"} ${on ? "border-[#444] border-r-white border-b-white" : "border-white border-r-[#aaa] border-b-[#aaa]"}`}
        >
          {t}
        </button>
      ))}
    </footer>
  );
}

function Deer() {
  return (
    <svg viewBox="0 0 132 180" className="h-[60px] w-[44px] shrink-0" fill="#cbcbcb" aria-label="3D66">
      <path d="M11 31l10 2 8-5 14 9 15 13-2 5-14 2c-5 10-1 20 7 29 9 11 24 11 42 12 15 1 25 8 26 18l-5 11c-2 12 5 18 4 29l2 22h-12l2-6-7-24-9-23c-3 4-3 9 2 18l2 35H81l5-8-3-28-7-17-37-5c-2 12-5 22-5 31l3 27H21l7-8-3-29c1-14-1-26-7-32C5 90-1 76 5 63c4-11 14-17 17-23z" />
      <g fill="none" stroke="#cbcbcb" strokeWidth="4" strokeLinecap="round">
        <path d="M40 36C36 26 38 14 44 6M39 24l-5-9M44 34c2-10 6-19 14-28M49 22l14-6M52 34c12-9 26-4 42-8s20-13 34-18M78 28l-8-13M94 26l-6-10M72 30c14 10 34 7 42-8" />
      </g>
    </svg>
  );
}

export default function App() {
  return (
    <main className="relative flex min-h-screen flex-col overflow-hidden bg-[#f0f0f0] font-['Noto_Sans','Noto_Sans_CJK_SC',sans-serif]">
      <div className="flex min-h-0 flex-1">
        <div className="flex min-w-0 flex-1 flex-col">
          <MenuBar />
          <Toolbars />
          <div className="flex flex-1">
            <aside className="flex w-[18px] shrink-0 flex-col items-center border-t border-r border-t-[#bbb] border-r-[#a9a9a9] pt-[3px] pr-[3px]">
              <Glyph name="repair" className="size-[14px]" />
              <h2 className="mt-[177px] rotate-180 text-[9px] leading-[12px] whitespace-nowrap text-[#222] [text-orientation:sideways] [writing-mode:vertical-rl]">图形修复管理器</h2>
            </aside>
            <div className="flex min-w-0 flex-1 flex-col">
              <div className="flex flex-1">
                <div className="flex w-5 shrink-0 flex-col">
                  <div className="flex h-[320px] w-[18px] flex-col border-r border-b border-[#aaa]">
                    <HGrip />
                    <div className="flex flex-1 flex-col pb-[3px]">
                      {drawTools.map(([n, l]) => <Tool key={n} name={n} label={l} className="min-h-0 flex-1" />)}
                    </div>
                  </div>
                </div>
                <div className="flex min-w-0 flex-1 flex-col">
                  <div className="flex flex-1">
                    <DrawingArea />
                    <div className="flex w-[14px] shrink-0 flex-col items-center border-l border-[#777] bg-[#f2f2f2] py-[4px]">
                      <button aria-label="向上滚动"><svg viewBox="0 0 6 4" className="block h-1 w-[6px]"><path d="M0 4h6L3 1z" fill="#444" /></svg></button>
                      <span className="mt-[48px] h-[12px] w-[11px] rounded-[1px] border border-[#999] bg-linear-to-r from-white to-[#ccc]" />
                      <button aria-label="向下滚动" className="mt-auto"><svg viewBox="0 0 6 4" className="block h-1 w-[6px]"><path d="M0 0h6L3 3z" fill="#444" /></svg></button>
                    </div>
                  </div>
                  <LayoutTabs />
                  <div className="h-5 shrink-0 border-t border-l border-[#999] p-[2px]">
                    <div className="h-full border border-white bg-[#f0ecec]" />
                  </div>
                </div>
                <div className="ml-px flex w-[19px] shrink-0 flex-col">
                  <HGrip />
                  <div className="flex h-[277px] flex-col">
                    {modifyTools.map(([n, l]) => <Tool key={n} name={n} label={l} className="min-h-0 flex-1" />)}
                  </div>
                  <div className="mt-[4px] border-t border-[#aaa]" />
                  <HGrip />
                  <div className="flex h-[66px] flex-col">
                    {orderTools.map(([n, l]) => <Tool key={n} name={n} label={l} className="min-h-0 flex-1" />)}
                  </div>
                </div>
              </div>
              <CommandArea />
            </div>
          </div>
          <StatusBar />
        </div>
        <div className="w-[6px] shrink-0 border-x border-l-[#777] border-r-[#b0a66a] bg-linear-to-r from-[#f7f2ba] to-[#e4d77d]" />
      </div>
      <div className="h-[5px] shrink-0 border-t border-[#a39c5c] bg-linear-to-b from-[#f3ecb0] to-[#d9cf7a]">
        <div className="ml-[760px] h-1 w-6 bg-[#cf8a45] blur-[1px]" />
      </div>

      <div className="absolute right-[124px] bottom-0 h-[106px] w-[110px] text-white/80 [text-shadow:0_0_2px_#999]" aria-hidden="true">
        <div className="ml-[75px] flex gap-[3px]">
          <span className="h-[18px] w-[12px] rounded-full bg-white/75" />
          <span className="h-[18px] w-[12px] rounded-full bg-white/75" />
        </div>
        <p className="font-['Liberation_Sans',sans-serif] text-[42px] leading-[40px] font-bold">Ba</p>
        <p className="pl-[2px] font-['Liberation_Sans',sans-serif] text-[20px] leading-[26px]">jing</p>
      </div>
      <section className="absolute right-0 bottom-0 flex h-[95px] w-[200px] items-center bg-[#222f55] pl-[12px] text-[#cfcfcf]">
        <Deer />
        <div className="ml-[8px] pt-[5px] whitespace-nowrap">
          <p className="flex items-center font-['Roboto','Noto_Sans_CJK_SC',sans-serif] leading-[30px]">
            <span className="text-[36px]">3D</span>
            <span className="text-[27px] font-medium">溜溜网</span>
          </p>
          <p className="font-['Inter',sans-serif] text-[23px] leading-[26px] font-medium">3D66.COM</p>
        </div>
      </section>
    </main>
  );
}
